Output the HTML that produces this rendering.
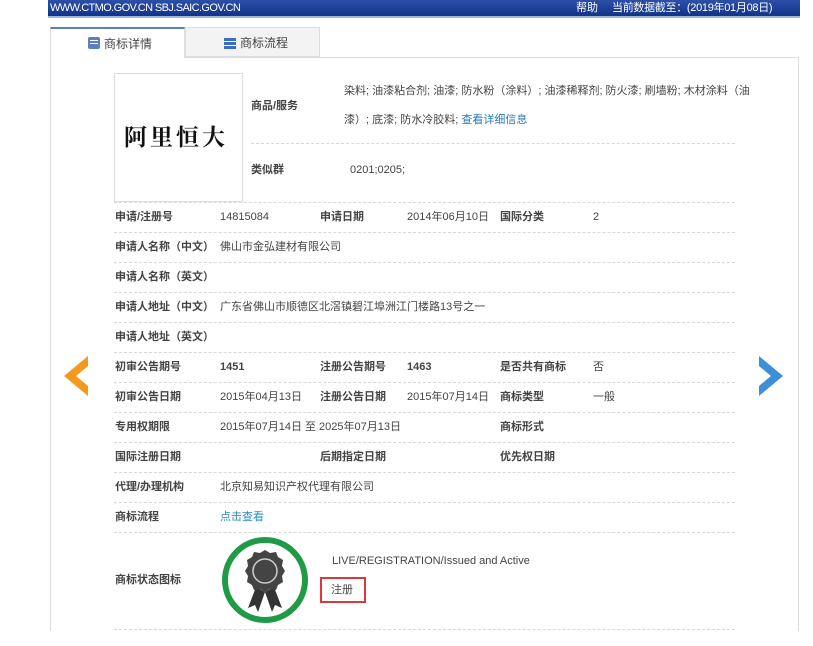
<!DOCTYPE html>
<html><head><meta charset="utf-8"><style>
*{margin:0;padding:0;box-sizing:border-box}
body{width:813px;height:646px;background:#fff;position:relative;overflow:hidden;font-family:"Liberation Sans","Noto Sans CJK SC",sans-serif;font-size:11px;color:#444}
.a{position:absolute;white-space:nowrap;line-height:16px}
.top{position:absolute;left:48px;top:0;width:752px;height:18px;background:linear-gradient(#2c4fa8,#12338a);border-bottom:2px solid #9fb3d9;color:#fff;font-size:11px}
.l{position:absolute;height:0;border-top:1px dashed #d8d8d8}
.b{font-weight:bold;color:#444}
</style></head><body>
<div class="top"><span class="a" style="left:2px;top:0px;letter-spacing:-0.6px">WWW.CTMO.GOV.CN SBJ.SAIC.GOV.CN</span><span class="a" style="left:528px;top:0px">帮助</span><span class="a" style="left:564px;top:0px;letter-spacing:-0.3px">当前数据截至：(2019年01月08日)</span></div>
<div class="a" style="left:50px;top:27px;width:135px;height:31px;background:#fff;border:1px solid #ddd;border-top:2px solid #5b7fbd;border-bottom:none"></div>
<div class="a" style="left:185px;top:27px;width:135px;height:30px;background:#f3f3f3;border:1px solid #ddd"></div>
<div class="a" style="left:88px;top:37px;width:12px;height:12px;background:#5a7fc2;border-radius:2px"><div style="margin:3px 2px;height:1px;background:#fff;box-shadow:0 3px 0 #fff"></div></div>
<span class="a" style="left:104px;top:36px;font-size:12px">商标详情</span>
<div class="a" style="left:224px;top:38px;width:12px;height:11px;background:repeating-linear-gradient(#3a6fc0 0 3px,#fff 3px 4px)"></div>
<span class="a" style="left:240px;top:35px;font-size:12px">商标流程</span>
<div class="a" style="left:50px;top:57px;width:749px;height:574px;border:1px solid #ddd;border-bottom:none"></div>
<div class="a" style="left:51px;top:56px;width:133px;height:3px;background:#fff"></div>
<div class="a" style="left:114px;top:73px;width:129px;height:129px;border:1px solid #ddd"></div>
<span class="a" style="left:124px;top:122px;font-family:'Noto Serif CJK SC',serif;font-weight:bold;font-size:23px;line-height:28px;color:#111;letter-spacing:3px">阿里恒大</span>
<span class="a b" style="left:251px;top:98px">商品/服务</span>
<span class="a" style="left:344px;top:83px">染料; 油漆粘合剂; 油漆; 防水粉（涂料）; 油漆稀释剂; 防火漆; 刷墙粉; 木材涂料（油</span>
<span class="a" style="left:344px;top:112px">漆）; 底漆; 防水冷胶料; <span style="color:#2a7ab8">查看详细信息</span></span>
<div class="l" style="left:251px;top:143px;width:484px"></div>
<span class="a b" style="left:251px;top:162px">类似群</span>
<span class="a" style="left:350px;top:162px">0201;0205;</span>
<div class="l" style="left:114px;top:202px;width:621px"></div>
<div class="l" style="left:114px;top:232px;width:621px"></div>
<div class="l" style="left:114px;top:262px;width:621px"></div>
<div class="l" style="left:114px;top:292px;width:621px"></div>
<div class="l" style="left:114px;top:322px;width:621px"></div>
<div class="l" style="left:114px;top:352px;width:621px"></div>
<div class="l" style="left:114px;top:382px;width:621px"></div>
<div class="l" style="left:114px;top:412px;width:621px"></div>
<div class="l" style="left:114px;top:442px;width:621px"></div>
<div class="l" style="left:114px;top:472px;width:621px"></div>
<div class="l" style="left:114px;top:502px;width:621px"></div>
<div class="l" style="left:114px;top:532px;width:621px"></div>
<div class="l" style="left:114px;top:629px;width:621px"></div>

<span class="a b" style="left:115px;top:209px">申请/注册号</span><span class="a" style="left:220px;top:209px">14815084</span><span class="a b" style="left:320px;top:209px">申请日期</span><span class="a" style="left:407px;top:209px">2014年06月10日</span><span class="a b" style="left:500px;top:209px">国际分类</span><span class="a" style="left:593px;top:209px">2</span>
<span class="a b" style="left:115px;top:239px">申请人名称（中文）</span><span class="a" style="left:220px;top:239px">佛山市金弘建材有限公司</span>
<span class="a b" style="left:115px;top:269px">申请人名称（英文）</span>
<span class="a b" style="left:115px;top:299px">申请人地址（中文）</span><span class="a" style="left:220px;top:299px">广东省佛山市顺德区北滘镇碧江埠洲江门楼路13号之一</span>
<span class="a b" style="left:115px;top:329px">申请人地址（英文）</span>
<span class="a b" style="left:115px;top:359px">初审公告期号</span><span class="a b" style="left:220px;top:359px">1451</span><span class="a b" style="left:320px;top:359px">注册公告期号</span><span class="a b" style="left:407px;top:359px">1463</span><span class="a b" style="left:500px;top:359px">是否共有商标</span><span class="a" style="left:593px;top:359px">否</span>
<span class="a b" style="left:115px;top:389px">初审公告日期</span><span class="a" style="left:220px;top:389px">2015年04月13日</span><span class="a b" style="left:320px;top:389px">注册公告日期</span><span class="a" style="left:407px;top:389px">2015年07月14日</span><span class="a b" style="left:500px;top:389px">商标类型</span><span class="a" style="left:593px;top:389px">一般</span>
<span class="a b" style="left:115px;top:419px">专用权期限</span><span class="a" style="left:220px;top:419px">2015年07月14日 至 2025年07月13日</span><span class="a b" style="left:500px;top:419px">商标形式</span>
<span class="a b" style="left:115px;top:449px">国际注册日期</span><span class="a b" style="left:320px;top:449px">后期指定日期</span><span class="a b" style="left:500px;top:449px">优先权日期</span>
<span class="a b" style="left:115px;top:479px">代理/办理机构</span><span class="a" style="left:220px;top:479px">北京知易知识产权代理有限公司</span>
<span class="a b" style="left:115px;top:509px">商标流程</span><span class="a" style="left:220px;top:509px;color:#2a8bc4">点击查看</span>
<span class="a b" style="left:115px;top:572px">商标状态图标</span>
<svg class="a" style="left:220px;top:535px" width="90" height="90" viewBox="0 0 90 90">
<circle cx="45" cy="45" r="40" fill="none" stroke="#1f9a45" stroke-width="6"/>
<path d="M36 52 L28 73 L35 70 L38 77 L45 57 Z M54 52 L62 73 L55 70 L52 77 L45 57 Z" fill="#333"/>
<path d="M45 15 L50 18 L56 17 L58 22 L63 25 L62 31 L65 36 L62 41 L63 47 L58 50 L56 55 L50 54 L45 57 L40 54 L34 55 L32 50 L27 47 L28 41 L25 36 L28 31 L27 25 L32 22 L34 17 L40 18 Z" fill="#444"/>
<circle cx="45" cy="36" r="12" fill="none" stroke="#ccc" stroke-width="1.5"/>
</svg>
<span class="a" style="left:332px;top:553px;color:#444">LIVE/REGISTRATION/Issued and Active</span>
<div class="a" style="left:320px;top:577px;width:46px;height:26px;border:2px solid #d63a3a"></div>
<span class="a" style="left:331px;top:582px">注册</span>
<svg class="a" style="left:64px;top:356px" width="26" height="40"><path d="M24 0 L0 20 L24 40 L24 30 L12 20 L24 10 Z" fill="#f39a1e"/></svg>
<svg class="a" style="left:759px;top:356px" width="26" height="40"><path d="M0 0 L24 20 L0 40 L0 30 L12 20 L0 10 Z" fill="#3f8fd6"/></svg>
</body></html>
